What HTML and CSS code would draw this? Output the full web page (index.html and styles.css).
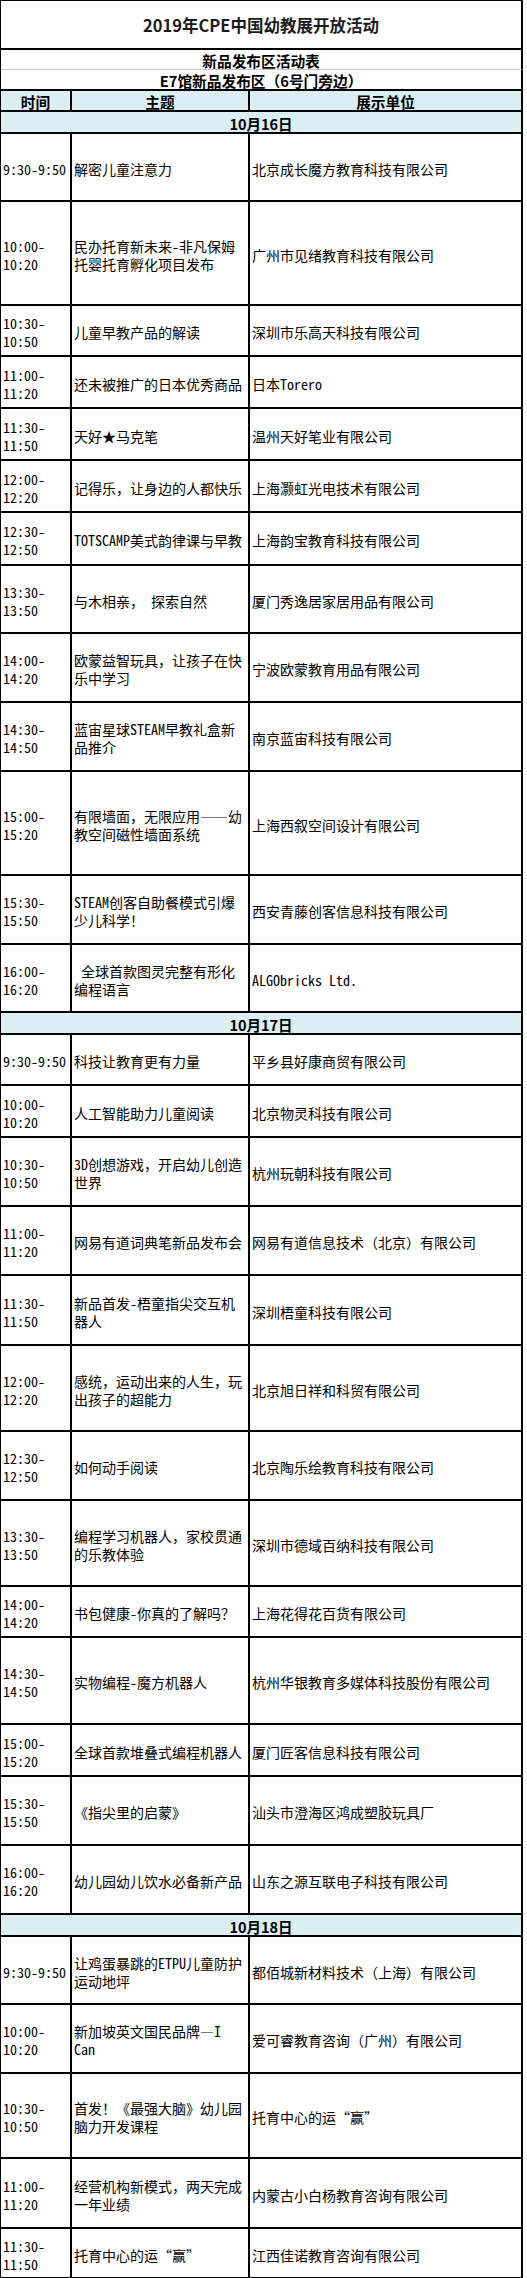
FILE: index.html
```html
<!DOCTYPE html>
<html lang="zh-CN">
<head>
<meta charset="utf-8">
<title>2019年CPE中国幼教展开放活动</title>
<link rel="stylesheet" href="styles.css">
</head>
<body>
<table class="sheet">
<colgroup><col class="c-time"><col class="c-topic"><col class="c-org"></colgroup>
<tbody>
<tr class="h49"><td colspan="3" class="title">2019年CPE中国幼教展开放活动</td></tr>
<tr class="h19"><td colspan="3" class="sub sub-top">新品发布区活动表</td></tr>
<tr class="h20"><td colspan="3" class="sub">E7馆新品发布区（6号门旁边）</td></tr>
<tr class="h20 head"><td>时间</td><td>主题</td><td>展示单位</td></tr>

<tr class="h22 day"><td colspan="3">10月16日</td></tr>
<tr class="h68"><td class="t">9:30-9:50</td><td class="p">解密儿童注意力</td><td class="o">北京成长魔方教育科技有限公司</td></tr>
<tr class="h104"><td class="t">10:00-<br>10:20</td><td class="p">民办托育新未来-非凡保姆<br>托婴托育孵化项目发布</td><td class="o">广州市见绪教育科技有限公司</td></tr>
<tr class="h51"><td class="t">10:30-<br>10:50</td><td class="p">儿童早教产品的解读</td><td class="o">深圳市乐高天科技有限公司</td></tr>
<tr class="h52"><td class="t">11:00-<br>11:20</td><td class="p">还未被推广的日本优秀商品</td><td class="o">日本Torero</td></tr>
<tr class="h52"><td class="t">11:30-<br>11:50</td><td class="p">天好★马克笔</td><td class="o">温州天好笔业有限公司</td></tr>
<tr class="h52"><td class="t">12:00-<br>12:20</td><td class="p">记得乐，让身边的人都快乐</td><td class="o">上海灏虹光电技术有限公司</td></tr>
<tr class="h53"><td class="t">12:30-<br>12:50</td><td class="p">TOTSCAMP美式韵律课与早教</td><td class="o">上海韵宝教育科技有限公司</td></tr>
<tr class="h68"><td class="t">13:30-<br>13:50</td><td class="p">与木相亲， 探索自然</td><td class="o">厦门秀逸居家居用品有限公司</td></tr>
<tr class="h69"><td class="t">14:00-<br>14:20</td><td class="p">欧蒙益智玩具，让孩子在快<br>乐中学习</td><td class="o">宁波欧蒙教育用品有限公司</td></tr>
<tr class="h69"><td class="t">14:30-<br>14:50</td><td class="p">蓝宙星球STEAM早教礼盒新<br>品推介</td><td class="o">南京蓝宙科技有限公司</td></tr>
<tr class="h104"><td class="t">15:00-<br>15:20</td><td class="p">有限墙面，无限应用——幼<br>教空间磁性墙面系统</td><td class="o">上海西叙空间设计有限公司</td></tr>
<tr class="h69"><td class="t">15:30-<br>15:50</td><td class="p">STEAM创客自助餐模式引爆<br>少儿科学！</td><td class="o">西安青藤创客信息科技有限公司</td></tr>
<tr class="h68"><td class="t">16:00-<br>16:20</td><td class="p">&ensp;全球首款图灵完整有形化<br>编程语言</td><td class="o">ALGObricks Ltd.</td></tr>

<tr class="h22 day"><td colspan="3">10月17日</td></tr>
<tr class="h51"><td class="t">9:30-9:50</td><td class="p">科技让教育更有力量</td><td class="o">平乡县好康商贸有限公司</td></tr>
<tr class="h52"><td class="t">10:00-<br>10:20</td><td class="p">人工智能助力儿童阅读</td><td class="o">北京物灵科技有限公司</td></tr>
<tr class="h69"><td class="t">10:30-<br>10:50</td><td class="p">3D创想游戏，开启幼儿创造<br>世界</td><td class="o">杭州玩朝科技有限公司</td></tr>
<tr class="h69"><td class="t">11:00-<br>11:20</td><td class="p">网易有道词典笔新品发布会</td><td class="o">网易有道信息技术（北京）有限公司</td></tr>
<tr class="h70"><td class="t">11:30-<br>11:50</td><td class="p">新品首发-梧童指尖交互机<br>器人</td><td class="o">深圳梧童科技有限公司</td></tr>
<tr class="h86"><td class="t">12:00-<br>12:20</td><td class="p">感统，运动出来的人生，玩<br>出孩子的超能力</td><td class="o">北京旭日祥和科贸有限公司</td></tr>
<tr class="h69"><td class="t">12:30-<br>12:50</td><td class="p">如何动手阅读</td><td class="o">北京陶乐绘教育科技有限公司</td></tr>
<tr class="h86"><td class="t">13:30-<br>13:50</td><td class="p">编程学习机器人，家校贯通<br>的乐教体验</td><td class="o">深圳市德域百纳科技有限公司</td></tr>
<tr class="h51"><td class="t">14:00-<br>14:20</td><td class="p">书包健康-你真的了解吗？</td><td class="o">上海花得花百货有限公司</td></tr>
<tr class="h87"><td class="t">14:30-<br>14:50</td><td class="p">实物编程-魔方机器人</td><td class="o">杭州华银教育多媒体科技股份有限公司</td></tr>
<tr class="h52"><td class="t">15:00-<br>15:20</td><td class="p">全球首款堆叠式编程机器人</td><td class="o">厦门匠客信息科技有限公司</td></tr>
<tr class="h69"><td class="t">15:30-<br>15:50</td><td class="p">《指尖里的启蒙》</td><td class="o">汕头市澄海区鸿成塑胶玩具厂</td></tr>
<tr class="h69"><td class="t">16:00-<br>16:20</td><td class="p">幼儿园幼儿饮水必备新产品</td><td class="o">山东之源互联电子科技有限公司</td></tr>

<tr class="h21 day"><td colspan="3">10月18日</td></tr>
<tr class="h68"><td class="t">9:30-9:50</td><td class="p">让鸡蛋暴跳的ETPU儿童防护<br>运动地坪</td><td class="o">都佰城新材料技术（上海）有限公司</td></tr>
<tr class="h69"><td class="t">10:00-<br>10:20</td><td class="p">新加坡英文国民品牌—I<br>Can</td><td class="o">爱可睿教育咨询（广州）有限公司</td></tr>
<tr class="h85"><td class="t">10:30-<br>10:50</td><td class="p">首发！《最强大脑》幼儿园<br>脑力开发课程</td><td class="o">托育中心的运“赢”</td></tr>
<tr class="h70"><td class="t">11:00-<br>11:20</td><td class="p">经营机构新模式，两天完成<br>一年业绩</td><td class="o">内蒙古小白杨教育咨询有限公司</td></tr>
<tr class="h50"><td class="t">11:30-<br>11:50</td><td class="p">托育中心的运“赢”</td><td class="o">江西佳诺教育咨询有限公司</td></tr>
</tbody>
</table>
</body>
</html>
```

FILE: styles.css
```css
html, body {
  margin: 0;
  padding: 0;
  background: #ffffff;
}

body {
  width: 527px;
  font-family: "Noto Sans Mono CJK SC", "Noto Sans CJK SC", sans-serif;
  color: #000000;
}

.sheet {
  border-collapse: separate;
  border-spacing: 0;
  table-layout: fixed;
  width: 523px;
  border-left: 1px solid #000;
  border-top: 1px solid #000;
}

.c-time { width: 71px; }
.c-topic { width: 178px; }
.c-org { width: 273px; }

.sheet td {
  box-sizing: border-box;
  border-right: 2px solid #000;
  border-bottom: 2px solid #000;
  padding: 3px 1px 0 2px;
  font-size: 14px;
  line-height: 18px;
  vertical-align: middle;
  white-space: nowrap;
  overflow: hidden;
}

/* row heights (spreadsheet rows) */
.h19 { height: 19px; }
.h20 { height: 20px; }
.h21 { height: 21px; }
.h22 { height: 22px; }
.h49 { height: 49px; }
.h50 { height: 50px; }
.h51 { height: 51px; }
.h52 { height: 52px; }
.h53 { height: 53px; }
.h68 { height: 68px; }
.h69 { height: 69px; }
.h70 { height: 70px; }
.h85 { height: 85px; }
.h86 { height: 86px; }
.h87 { height: 87px; }
.h104 { height: 104px; }

.sheet td.title {
  font-family: "Noto Sans CJK SC", sans-serif;
  font-weight: 700;
  font-size: 16.5px;
  text-align: center;
  padding: 0;
  color: #1a1a1a;
}

.sheet td.sub {
  font-family: "Noto Sans CJK SC", sans-serif;
  font-weight: 700;
  font-size: 14.7px;
  line-height: 16px;
  text-align: center;
  padding: 3px 0 0;
}

.sheet td.sub-top {
  border-bottom: 1px solid #c8c8c8;
}

.head td {
  background: #daeef3;
  font-family: "Noto Sans CJK SC", sans-serif;
  font-weight: 700;
  font-size: 14.7px;
  line-height: 16px;
  text-align: center;
  padding: 3px 0 0;
}

.day td {
  background: #daeef3;
  font-family: "Noto Sans CJK SC", sans-serif;
  font-weight: 700;
  font-size: 14.5px;
  line-height: 16px;
  text-align: center;
  padding: 4px 0 0;
}
```
